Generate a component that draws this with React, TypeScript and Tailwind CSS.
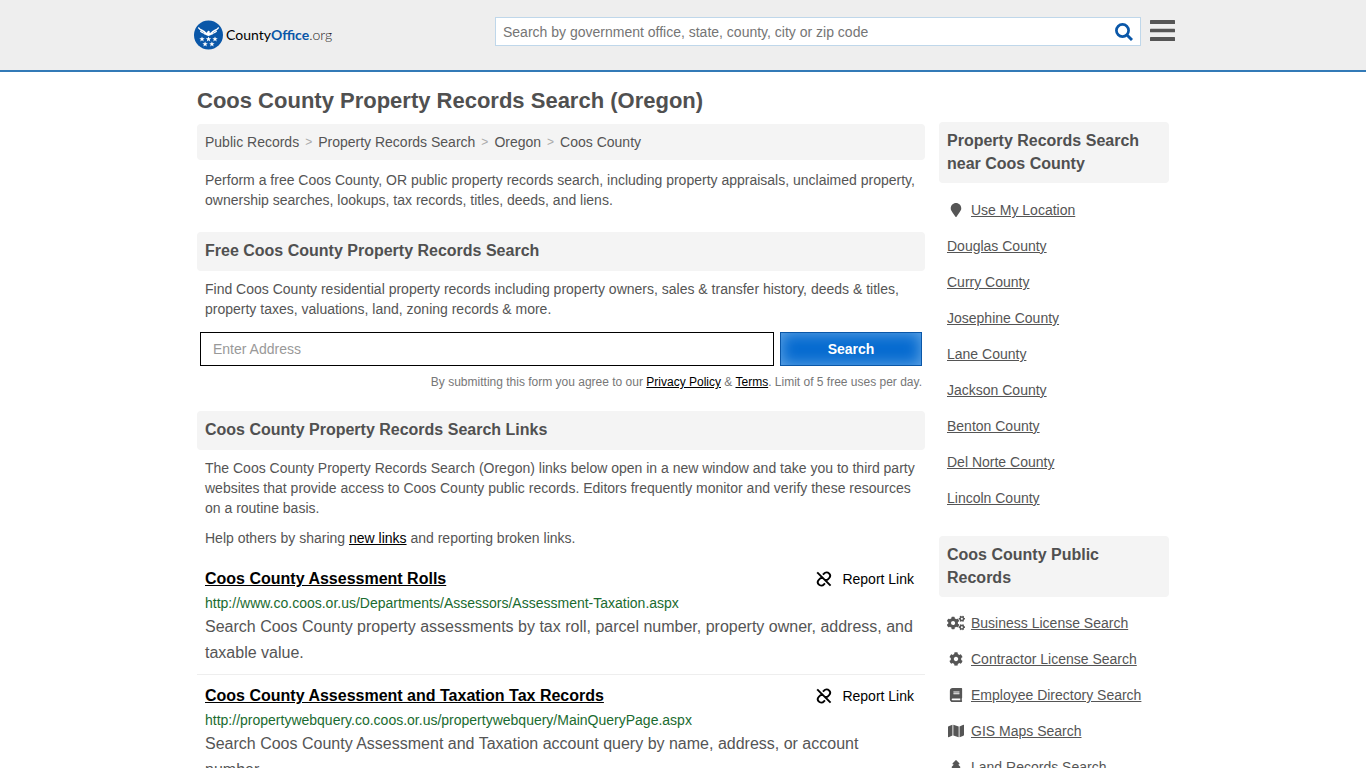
import type { FormEvent, ReactNode } from "react";
import type { IconType } from "react-icons";
import { FaBook, FaCog, FaCogs, FaMap, FaMapMarker, FaTree } from "react-icons/fa";

const headingCls = "rounded bg-[#f4f4f4] px-2 pt-[7px] pb-2 text-base font-bold text-[#505050]";
const textCls = "px-2 text-sm leading-5 text-[#555]";

const CRUMBS = ["Public Records", "Property Records Search", "Oregon", "Coos County"];

const COUNTIES = [
  "Douglas County",
  "Curry County",
  "Josephine County",
  "Lane County",
  "Jackson County",
  "Benton County",
  "Del Norte County",
  "Lincoln County",
];

// size: the wider glyphs need a bigger box to end up equally tall
const RECORDS: { label: string; icon: IconType; size: number }[] = [
  { label: "Business License Search", icon: FaCogs, size: 18 },
  { label: "Contractor License Search", icon: FaCog, size: 14 },
  { label: "Employee Directory Search", icon: FaBook, size: 14 },
  { label: "GIS Maps Search", icon: FaMap, size: 16 },
  { label: "Land Records Search", icon: FaTree, size: 14 },
];

const RESULTS = [
  {
    title: "Coos County Assessment Rolls",
    url: "http://www.co.coos.or.us/Departments/Assessors/Assessment-Taxation.aspx",
    text: "Search Coos County property assessments by tax roll, parcel number, property owner, address, and taxable value.",
  },
  {
    title: "Coos County Assessment and Taxation Tax Records",
    url: "http://propertywebquery.co.coos.or.us/propertywebquery/MainQueryPage.aspx",
    text: "Search Coos County Assessment and Taxation account query by name, address, or account number.",
  },
];

const STAR = "M0-2.8.75-.9 2.7-.85 1.15.35 1.7 2.3 0 1.15-1.7 2.3-1.15.35-2.7-.85-.75-.9Z";
const STARS = [
  [8.5, 19.2],
  [15, 19.2],
  [21.5, 19.2],
  [11.6, 24.2],
  [18.4, 24.2],
];

function Logo() {
  return (
    <a href="#" className="flex items-center gap-0.5">
      <svg viewBox="0 0 30 30" className="size-[30px]" aria-hidden="true">
        <circle cx="14.5" cy="15" r="14.5" fill="#0a57a8" />
        <g transform="translate(-.5 0)">
          <g fill="none" stroke="#fff" strokeLinecap="round">
            <path strokeWidth="1.6" d="M5.3 8c1.2 2.3 4.7 2.3 6.9 5.3M24.7 8c-1.2 2.3-4.7 2.3-6.9 5.3" />
            <path strokeWidth="1.3" d="M7.2 11.3c1 1.3 2.8 1.4 4.3 2.7M22.8 11.3c-1 1.3-2.8 1.4-4.3 2.7" />
          </g>
          <g fill="#fff">
            <path d="M11.5 12.2c1.3.9 2 .6 2.4-.5.3-.8 1-1 1.7-.7l1 .9-.8.2c.3 1 1.2 1 2.7.1l.3 1.900c-1 .7-1.300 1.500-3.800 2-2.500-.5-2.800-1.300-3.800-2Z" />
            {STARS.map(([x, y]) => (
              <path key={`${x}-${y}`} d={STAR} transform={`translate(${x} ${y})`} />
            ))}
          </g>
        </g>
      </svg>
      <span className="font-[Lato,sans-serif] text-sm text-black">
        County<b className="text-[#0a57a8]">Office</b>
        <span className="font-light text-[#222]">.org</span>
      </span>
    </a>
  );
}

function SearchIcon() {
  return (
    <svg viewBox="0 0 18 18" className="size-[18px]" fill="none" stroke="currentColor" aria-hidden="true">
      <circle cx="7.5" cy="7.5" r="6.1" strokeWidth="2.7" />
      <path d="m11.7 11.7 5.3 5.3" strokeWidth="2.9" />
    </svg>
  );
}

function MenuIcon() {
  return (
    <svg viewBox="0 0 25 22" className="h-[22px] w-[25px]" fill="currentColor" aria-hidden="true">
      <rect y="0" width="25" height="4" rx=".5" />
      <rect y="8.7" width="25" height="3.6" rx=".5" />
      <rect y="17" width="25" height="4" rx=".5" />
    </svg>
  );
}

// Broken chain with a slash through it
function UnlinkIcon() {
  return (
    <svg
      viewBox="0 0 16 16"
      className="size-4"
      fill="none"
      stroke="currentColor"
      strokeWidth="1.9"
      aria-hidden="true"
    >
      <path d="m1.200 1.300 13.400 13.400" />
      <path d="M6.900 3.700 8 2.600a3.300 3.300 0 0 1 5.100-.1 3.400 3.400 0 0 1 0 4.700l-1.700 1.700H9" />
      <path d="M9 12.300 7.900 13.400a3.300 3.300 0 0 1-5.100.1 3.400 3.400 0 0 1 0-4.700L4.500 7.100h2.400" />
    </svg>
  );
}

function Header() {
  return (
    <header className="border-b-2 border-[#337ab7] bg-[#eee]">
      <div className="mx-auto flex h-[70px] max-w-[984px] items-start pl-[3px]">
        <div className="flex-1 pt-5">
          <Logo />
        </div>
        <form
          onSubmit={(e: FormEvent) => e.preventDefault()}
          className="mt-[17px] flex h-[29px] w-[646px] border border-[#bfd7ea] bg-white"
        >
          <input
            type="search"
            aria-label="Search CountyOffice.org"
            placeholder="Search by government office, state, county, city or zip code"
            className="min-w-0 flex-1 px-[7px] text-sm text-[#333] outline-none placeholder:text-[#757575]"
          />
          <button type="submit" aria-label="Search" className="px-[7px] text-[#0a57a8]">
            <SearchIcon />
          </button>
        </form>
        <button type="button" aria-label="Menu" className="mt-5 ml-[9px] text-[#555]">
          <MenuIcon />
        </button>
      </div>
    </header>
  );
}

function Breadcrumb() {
  return (
    <nav className="rounded bg-[#f4f4f4] px-2 py-2 text-sm leading-5 text-[#555]">
      <ol className="flex gap-1.5">
        {CRUMBS.map((c, i) => (
          <li key={c} className="flex gap-1.5">
            {i > 0 && <span className="text-xs leading-5 text-[#aaa]">&gt;</span>}
            <a href="#">{c}</a>
          </li>
        ))}
      </ol>
    </nav>
  );
}

function AddressForm() {
  return (
    <form onSubmit={(e) => e.preventDefault()} className="mt-[13px] px-[3px]">
      <div className="flex gap-1.5">
        <input
          type="text"
          aria-label="Address"
          placeholder="Enter Address"
          className="h-[34px] min-w-0 flex-1 border border-black px-3 text-sm placeholder:text-[#999]"
        />
        <button
          type="submit"
          className="h-[34px] w-[142px] border border-[#0a57a8] bg-[#066bd0] text-sm font-bold text-white shadow-[inset_0_0_15px_#6aaae6]"
        >
          Search
        </button>
      </div>
      <p className="mt-2 text-right text-xs leading-4 text-[#777]">
        By submitting this form you agree to our{" "}
        <a href="#" className="text-black underline">Privacy Policy</a> &amp;{" "}
        <a href="#" className="text-black underline">Terms</a>. Limit of 5 free uses per day.
      </p>
    </form>
  );
}

function Result({ title, url, text }: (typeof RESULTS)[number]) {
  return (
    <li className="border-b border-[#eee] px-2 py-2">
      <div className="flex items-center justify-between pr-[3px]">
        <h3 className="text-base leading-[26px] font-bold">
          <a href="#" className="text-black underline">{title}</a>
        </h3>
        <button type="button" className="flex items-center gap-2.5 text-sm text-black">
          <UnlinkIcon />
          Report Link
        </button>
      </div>
      <p className="text-sm leading-[22px] text-[#1a6b2f]">{url}</p>
      <p className="text-base leading-[26px] text-[#555]">{text}</p>
    </li>
  );
}

type SideLinkProps = { icon?: IconType; size?: number; children: ReactNode };

function SideLink({ icon: Icon, size = 14, children }: SideLinkProps) {
  return (
    <li className="flex h-9 items-center gap-1.5">
      {Icon && (
        <span className="flex w-[18px] justify-center">
          <Icon size={size} />
        </span>
      )}
      <a href="#" className="underline">{children}</a>
    </li>
  );
}

function Sidebar() {
  return (
    <aside className="w-[230px] shrink-0 pt-[50px] text-sm text-[#555]">
      <h2 className={`${headingCls} leading-[23px]`}>Property Records Search near Coos County</h2>
      <ul className="px-2 pt-[9px]">
        <SideLink icon={FaMapMarker}>Use My Location</SideLink>
        {COUNTIES.map((c) => (
          <SideLink key={c}>{c}</SideLink>
        ))}
      </ul>
      <h2 className={`${headingCls} mt-5 leading-[23px]`}>Coos County Public Records</h2>
      <ul className="px-2 pt-2">
        {RECORDS.map((r) => (
          <SideLink key={r.label} icon={r.icon} size={r.size}>{r.label}</SideLink>
        ))}
      </ul>
    </aside>
  );
}

export default function App() {
  return (
    <div className="h-screen overflow-hidden bg-white font-['Liberation_Sans',Arial,sans-serif]">
      <Header />
      <div className="mx-auto flex max-w-[972px] gap-3.5">
        <main className="min-w-0 flex-1">
          <h1 className="pt-[13px] pb-[7px] text-[22px] leading-8 font-bold text-[#505050]">
            Coos County Property Records Search (Oregon)
          </h1>
          <Breadcrumb />
          <p className={`${textCls} mt-2.5`}>
            Perform a free Coos County, OR public property records search, including property appraisals,
            unclaimed property, ownership searches, lookups, tax records, titles, deeds, and liens.
          </p>

          <h2 className={`${headingCls} mt-[22px] leading-6`}>Free Coos County Property Records Search</h2>
          <p className={`${textCls} mt-2`}>
            Find Coos County residential property records including property owners, sales &amp; transfer
            history, deeds &amp; titles, property taxes, valuations, land, zoning records &amp; more.
          </p>
          <AddressForm />

          <h2 className={`${headingCls} mt-[21px] leading-6`}>Coos County Property Records Search Links</h2>
          <p className={`${textCls} mt-2`}>
            The Coos County Property Records Search (Oregon) links below open in a new window and take you
            to third party websites that provide access to Coos County public records. Editors frequently
            monitor and verify these resources on a routine basis.
          </p>
          <p className={`${textCls} mt-2.5`}>
            Help others by sharing <a href="#" className="text-black underline">new links</a> and reporting
            broken links.
          </p>
          <ul className="mt-2.5">
            {RESULTS.map((r) => (
              <Result key={r.title} {...r} />
            ))}
          </ul>
        </main>
        <Sidebar />
      </div>
    </div>
  );
}
